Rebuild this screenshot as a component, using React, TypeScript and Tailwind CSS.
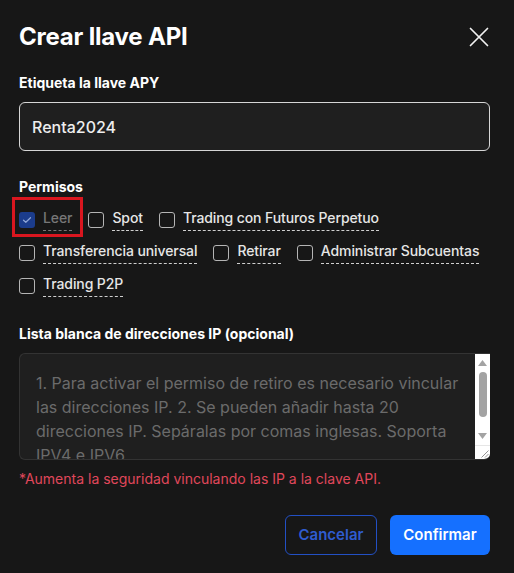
import { useState } from "react";

type Perm = { id: string; label: string; checked?: boolean; disabled?: boolean };

const rows: Perm[][] = [
  [
    { id: "read", label: "Leer", checked: true, disabled: true },
    { id: "spot", label: "Spot" },
    { id: "futures", label: "Trading con Futuros Perpetuo" },
  ],
  [
    { id: "transfer", label: "Transferencia universal" },
    { id: "withdraw", label: "Retirar" },
    { id: "sub", label: "Administrar Subcuentas" },
  ],
  [{ id: "p2p", label: "Trading P2P" }],
];

function Check({ perm, on, toggle }: { perm: Perm; on: boolean; toggle: () => void }) {
  return (
    <label className="relative flex items-center gap-2 whitespace-nowrap cursor-pointer">
      <span
        onClick={perm.disabled ? undefined : toggle}
        className={
          on
            ? "flex h-4 w-4 items-center justify-center rounded-[3px] bg-[#1b3c8c]"
            : "flex h-4 w-4 items-center justify-center rounded-[3px] border border-[#b5b5b5]"
        }
      >
        {on && (
          <svg width="10" height="8" viewBox="0 0 10 8" fill="none">
            <path d="M1.5 4.2 3.8 6.3 8.5 1.7" stroke="#8fa6d8" strokeWidth="1.2" strokeLinecap="round" strokeLinejoin="round" />
          </svg>
        )}
      </span>
      <span
        className={
          perm.disabled
            ? "border-b border-dashed border-[#777] pb-[2px] text-[14px] font-medium leading-5 tracking-[-0.1px] text-[#777]"
            : "border-b border-dashed border-[#d0d0d0] pb-[2px] text-[14px] font-medium leading-5 tracking-[-0.1px] text-[#e6e6e6]"
        }
      >
        {perm.label}
      </span>
      {perm.id === "read" && (
        <span className="pointer-events-none absolute left-[-7px] top-[-11px] h-[40px] w-[71px] border-[3px] border-[#d9161f]" />
      )}
    </label>
  );
}

// stand-in for the native textarea scrollbar shown in the screenshot
function FakeScrollbar() {
  return (
    <div className="flex w-[15px] flex-col bg-white">
      <div className="flex flex-1 flex-col items-center pt-[6px]">
        <svg width="9" height="6" viewBox="0 0 9 6">
          <path d="M4.5 0 9 6H0z" fill="#a3a3a3" />
        </svg>
        <div className="mt-[6px] h-[45px] w-[8px] rounded-full bg-[#a3a3a3]" />
        <div className="flex-1" />
        <svg width="9" height="6" viewBox="0 0 9 6" className="mb-[6px]">
          <path d="M0 0h9L4.5 6z" fill="#a3a3a3" />
        </svg>
      </div>
      <div className="flex h-[14px] items-end justify-end border-t border-[#e6e6e6] pb-[1px] pr-[1px]">
        <svg width="8" height="8" viewBox="0 0 8 8">
          <path d="M7.5 0.5 0.5 7.5M7.5 4 4 7.5" stroke="#8a8a8a" strokeWidth="0.9" />
        </svg>
      </div>
    </div>
  );
}

export default function App() {
  const [name, setName] = useState("Renta2024");
  const [checked, setChecked] = useState<Record<string, boolean>>({ read: true });

  return (
    <div
      className="flex h-[573px] w-[514px] flex-col bg-[#171717] pl-[19px] pr-[24px] text-white"
      style={{ fontFamily: "Inter, 'Noto Sans', sans-serif" }}
    >
      <div className="flex items-center justify-between pt-[21px]">
        <h1 className="text-[24px] font-bold leading-8 tracking-[-0.2px]">Crear llave API</h1>
        <button className="mr-[-3px] p-1">
          <svg width="20" height="20" viewBox="0 0 20 20" fill="none">
            <path d="M1.5 1.5 18.5 18.5M18.5 1.5 1.5 18.5" stroke="#f2f2f2" strokeWidth="1.7" strokeLinecap="round" />
          </svg>
        </button>
      </div>

      <div className="mt-[20px] text-[14px] font-bold leading-5">Etiqueta la llave APY</div>
      <input
        value={name}
        onChange={(e) => setName(e.target.value)}
        className="mt-[9px] h-[49px] w-full rounded-[6px] border border-[#d6d6d6] bg-[#1f1f1f] px-[12px] text-[16px] font-medium text-[#ededed] outline-none"
      />

      <div className="mt-[26px] text-[14px] font-bold leading-5">Permisos</div>
      <div className="mt-[6px] flex flex-col">
        {rows.map((row, i) => (
          <div key={i} className="flex h-[33px] items-center gap-4">
            {row.map((p) => (
              <Check
                key={p.id}
                perm={p}
                on={!!checked[p.id]}
                toggle={() => setChecked({ ...checked, [p.id]: !checked[p.id] })}
              />
            ))}
          </div>
        ))}
      </div>

      <div className="mt-[22px] text-[14px] font-bold leading-5">Lista blanca de direcciones IP (opcional)</div>
      <div className="mt-[9px] flex h-[107px] w-full overflow-hidden rounded-l-[6px] rounded-br-[6px] border-y border-l border-[#333] bg-[#1f1f1f]">
        <textarea
          readOnly
          value="1. Para activar el permiso de retiro es necesario vincular las direcciones IP. 2. Se pueden añadir hasta 20 direcciones IP. Sepáralas por comas inglesas. Soporta IPV4 e IPV6."
          className="h-full flex-1 resize-none overflow-hidden bg-transparent pl-[16px] pr-[8px] pt-[17px] text-[16px] leading-6 text-[#6b6b6b] outline-none"
        />
        <FakeScrollbar />
      </div>
      <p className="mt-[9px] text-[14px] leading-5 text-[#e0475b]">*Aumenta la seguridad vinculando las IP a la clave API.</p>

      <div className="mt-[26px] flex justify-end gap-[13px]">
        <button className="h-[40px] w-[92px] rounded-[6px] border border-[#2350c4] text-[15px] font-semibold text-[#2f5ccf]">
          Cancelar
        </button>
        <button className="h-[40px] w-[100px] rounded-[6px] bg-[#1570ff] text-[15px] font-semibold text-white">
          Confirmar
        </button>
      </div>
    </div>
  );
}
